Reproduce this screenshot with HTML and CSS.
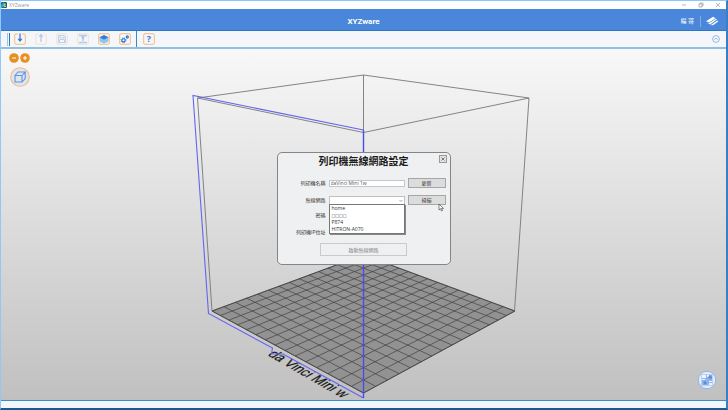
FILE: index.html
```html
<!DOCTYPE html>
<html lang="zh-Hant">
<head>
<meta charset="utf-8">
<title>XYZware</title>
<link rel="stylesheet" href="styles.css">
</head>
<body>
<div class="window">
  <div class="titlebar">
    <svg class="app-icon" viewBox="0 0 6 6"><rect width="6" height="6" rx="1" fill="#17608c"/><path d="M0 3 3 0v4L1 6H0z" fill="#1fa2c4"/><path d="M3 1 5 2 4 5 2 4z" fill="#9ccb4c"/><path d="M3 4h2v1H3z" fill="#e5c93b"/></svg>
    <span class="app-name">XYZware</span>
    <div class="window-buttons">
      <button aria-label="最小化"><svg viewBox="0 0 6 6"><path d="M1 3h4"/></svg></button>
      <button aria-label="還原"><svg viewBox="0 0 6 6"><path d="M1 2h3v3H1zM2 2V1h3v3H4"/></svg></button>
      <button aria-label="關閉"><svg viewBox="0 0 6 6"><path d="m1 1 4 4M5 1 1 5"/></svg></button>
    </div>
  </div>

  <header class="header">
    <h1>XYZware</h1>
    <div class="account">
      <span class="user">楊 哥</span>
      <svg class="brand" viewBox="0 0 14 10"><path d="M1 5.200 8 .8 10.600 2.300 4 6.600z"/><path d="M1.300 7.200 3.600 7.400 11 2.700 12 3.600 5.300 8.200z"/><path d="M4.200 8.900 6.200 8.700 12.400 4.400 13.300 5.500 8 9.200z"/></svg>
    </div>
  </header>

  <div class="toolbar">
    <span class="grip"></span>
    <button aria-label="匯入"><svg viewBox="0 0 12 12"><path class="frame" d="M4 1H2Q.7 1 .7 2v8q0 1.300 1.300 1.300h8q1.300 0 1.300-1.300V2q0-1-1.300-1H8"/><path class="line" d="M6 .5V8"/><path class="fill" d="M3.500 5.700h5L6 8.900z"/></svg></button>
    <button aria-label="匯出" disabled><svg viewBox="0 0 12 12"><path class="frame" d="M4 1H2Q.7 1 .7 2v8q0 1.300 1.300 1.300h8q1.300 0 1.300-1.300V2q0-1-1.300-1H8"/><path class="line" d="M6 2v7"/><path class="fill" d="M3.500 3.700h5L6 .5z"/></svg></button>
    <button aria-label="儲存" disabled><svg viewBox="0 0 12 12"><rect class="frame" x=".7" y=".7" width="10.600" height="10.600" rx="1.300"/><path class="thin" d="M2.500 2.500h6l1 1v6h-7zM4 2.500V5h4V2.500M3.500 9.500v-3h5v3"/></svg></button>
    <button aria-label="列印" disabled><svg viewBox="0 0 12 12"><rect class="frame" x=".7" y=".7" width="10.600" height="10.600" rx="1.300"/><path class="line" d="M2 2.500h8M6 3v5M2 9.500h8"/><path class="fill" d="M4.500 3h3v2L6 7 4.500 5z"/></svg></button>
    <button aria-label="切層"><svg viewBox="0 0 12 12"><rect class="frame" x=".7" y=".7" width="10.600" height="10.600" rx="1.300"/><path class="soft" d="m1.500 4.500 4.500 2 4.500-2v4L6 10.700 1.500 8.500z"/><path class="fill" d="M1.300 4.300 6 2l4.700 2.300L6 6.800z"/></svg></button>
    <button aria-label="設定"><svg viewBox="0 0 12 12"><rect class="frame" x=".7" y=".7" width="10.600" height="10.600" rx="1.300"/><circle class="line" cx="4.500" cy="7.300" r="1.700"/><circle class="gear" cx="4.500" cy="7.300" r="2.500"/><circle class="line" cx="8.300" cy="4" r="1"/></svg></button>
    <span class="divider"></span>
    <button class="help" aria-label="說明"><svg viewBox="0 0 12 12"><rect class="frame" x=".7" y=".7" width="10.600" height="10.600" rx="1.300"/></svg><span>?</span></button>
    <button class="collapse" aria-label="收合"><svg viewBox="0 0 8 8"><circle cx="4" cy="4" r="3.400"/><path d="m2.300 4.600 1.700-1.500 1.700 1.500"/></svg></button>
  </div>

  <main class="scene">
    <svg class="stage" viewBox="0 49 728 351" aria-hidden="true">
      <g class="floor" id="floor"></g>
      <g class="volume">
        <path d="M197.500 98 363.500 75 529 98 363.500 132.500zM363.500 75V130M197.500 98 212 311M529 98 514.500 311"/>
      </g>
      <text class="model" transform="matrix(.87 .5 -1 .6 267 355)">da Vinci Mini w</text>
      <path class="outline" d="M363.500 130 193 95.500 208.500 313.500 272.500 348 271.500 354H283L363.500 398"/>
      <path class="outline axis" d="M363.500 130V398"/>
    </svg>

    <div class="view-tools">
      <div class="zoom-buttons">
        <button aria-label="縮小"><svg viewBox="0 0 10 10"><circle cx="5" cy="5" r="4.800"/><path d="M3 5h4"/></svg></button>
        <button aria-label="放大"><svg viewBox="0 0 10 10"><circle cx="5" cy="5" r="4.800"/><path d="M3 5h4M5 3v4"/></svg></button>
      </div>
      <button class="cube" aria-label="視角"><svg viewBox="0 0 20 20"><circle cx="10" cy="10" r="9.300"/><path d="M5 8.500h7V15H5zM5 8.500l3-3.500h7.200L12 8.500M12 15l3.200-3.500V5"/></svg></button>
    </div>

    <section class="dialog" role="dialog" aria-labelledby="dialog-title">
      <h2 id="dialog-title">列印機無線網路設定</h2>
      <button class="close" aria-label="關閉"><svg viewBox="0 0 8 8"><path d="m2 2 4 4M6 2 2 6"/></svg></button>
      <form class="form">
        <label for="printer">列印機名稱</label>
        <input id="printer" type="text" value="daVinci Mini 1w">
        <button type="button">更新</button>

        <label for="network">無線網路</label>
        <div class="combo">
          <select id="network"><option></option></select>
          <svg class="arrow" viewBox="0 0 4 4"><path d="m.5 1 1.500 1.500L3.500 1"/></svg>
          <ul class="options">
            <li>home</li>
            <li class="boxes">□□□□</li>
            <li>P874</li>
            <li>HITRON-A070</li>
          </ul>
        </div>
        <button type="button" class="scan">掃描</button>

        <label for="password">密碼</label>
        <input id="password" type="password">
        <span></span>

        <label for="address">列印機IP位址</label>
        <output id="address"></output>
      </form>
      <button class="activate" disabled>啟動無線網路</button>
      <svg class="pointer" viewBox="0 0 6 9"><path d="M1 1v6l1.500-1.300L3.500 8l1-.5-1-2.100h2z"/></svg>
    </section>

    <button class="monitor" aria-label="印表機狀態"><svg viewBox="0 0 20 20"><circle cx="10" cy="10" r="8.700"/><rect x="4.500" y="4.500" width="11" height="11" fill="#91b4e8"/><path d="M5 5h4v3H5zM5 9h3v1H5zM12 11h3v1h-3zM12 13h3v2h-3zM10 5h2v2h-2z" fill="#edf4ff"/><path d="M11 8V7l2-2 2 2v2zM6 12l2-1 2 2-2 2z" fill="#5a8fdc"/></svg></button>
  </main>
  <footer class="status"></footer>
</div>
<script src="floor.js"></script>
</body>
</html>
```
FILE: styles.css
```css
* {
  box-sizing: border-box;
}

body {
  margin: 0;
  font-family: "Open Sans", "Noto Sans CJK TC", sans-serif;
  color: #333;
}

button {
  margin: 0;
  padding: 0;
  border: 0;
  background: none;
  font: inherit;
  color: inherit;
}

svg {
  display: block;
}

.window {
  display: flex;
  flex-direction: column;
  height: 100vh;
  overflow: hidden;
  border-top: 1px solid #8fc6fa;
  border-left: 1px solid #91c8fb;
  border-right: 2px solid #377fc6;
  border-bottom: 2px solid #1e5793;
}

.titlebar {
  display: flex;
  align-items: center;
  gap: 2px;
  height: 8px;
  flex: none;
  background: #fff;
}

.app-icon {
  width: 6px;
  height: 6px;
}

.app-name {
  font-size: 5px;
  line-height: 8px;
  color: #999;
}

.window-buttons {
  display: flex;
  gap: 11px;
  margin-left: auto;
  padding-right: 5px;
}

.window-buttons svg {
  width: 6px;
  height: 6px;
  fill: none;
  stroke: #888;
  stroke-width: 0.6;
}

.header {
  display: grid;
  grid-template-columns: 1fr auto 1fr;
  align-items: center;
  height: 22px;
  flex: none;
  padding-top: 3px;
  background: #4a86d9;
  border-bottom: 1px solid #2878c8;
  color: #fff;
}

.header h1 {
  grid-column: 2;
  margin: 0;
  font-family: Roboto, sans-serif;
  font-size: 8px;
  font-weight: 700;
}

.account {
  display: flex;
  align-items: center;
  justify-content: flex-end;
  padding-right: 7px;
}

.user {
  padding-right: 6px;
  border-right: 1px solid #82acdf;
  font-size: 6px;
  line-height: 11px;
}

.brand {
  width: 14px;
  height: 10px;
  margin-left: 4px;
  fill: #fff;
}

.toolbar {
  display: flex;
  align-items: center;
  gap: 9px;
  height: 18px;
  flex: none;
  padding: 0 6px;
  background: #f4f6fa;
  border-bottom: 2px solid #91bfe0;
}

.toolbar button {
  width: 12px;
  height: 12px;
}

.grip {
  width: 3px;
  height: 13px;
  margin-right: -5px;
  border-left: 1px solid #9fc3de;
  border-right: 1px solid #2c77b4;
}

.divider {
  width: 1px;
  height: 16px;
  margin: 0 -3px 0 -4px;
  background: #388ac2;
}

.toolbar svg {
  fill: none;
  stroke: #3a7ad0;
}

.toolbar .frame {
  stroke: #f5bd7b;
}

.toolbar .line {
  stroke-width: 1.3;
}

.toolbar .thin {
  stroke-width: 0.8;
}

.toolbar .fill {
  fill: #3a7ad0;
  stroke: none;
}

.toolbar .soft {
  fill: #8fc5f3;
  stroke: none;
}

.toolbar .gear {
  stroke-width: 0.8;
  stroke-dasharray: 1 1;
}

.toolbar button:disabled {
  opacity: 0.35;
}

.help {
  display: grid;
}

.help svg,
.help span {
  grid-area: 1 / 1;
}

.help span {
  font-size: 9px;
  font-weight: 700;
  line-height: 12px;
  color: #3f77c8;
}

.toolbar .collapse {
  width: 8px;
  height: 8px;
  margin-left: auto;
}

.collapse svg {
  stroke: #82abe0;
  stroke-width: 0.8;
}

.scene {
  position: relative;
  flex: 1;
  min-height: 0;
  background: linear-gradient(#f8f8f8, #c0c0c0);
}

.stage {
  position: absolute;
  inset: 0 -2px 0 -1px;
  width: calc(100% + 3px);
  height: 100%;
}

.floor .slab {
  fill: #929292;
}

.floor path {
  fill: none;
  stroke: #414141;
  stroke-width: 0.7;
}

.volume {
  fill: none;
  stroke: #777;
  stroke-width: 0.9;
}

.outline {
  fill: none;
  stroke: #6464f0;
  stroke-width: 1.1;
}

.axis {
  stroke: #4a4af0;
  stroke-width: 1.4;
}

.model {
  font-family: "Liberation Sans", sans-serif;
  font-size: 13px;
  fill: #171717;
  stroke: #171717;
  stroke-width: 0.2;
}

.view-tools {
  position: absolute;
  top: 4px;
  left: 8px;
}

.zoom-buttons {
  display: flex;
  gap: 1px;
}

.zoom-buttons svg {
  width: 10px;
  height: 10px;
  fill: #e78f20;
  stroke: #fff;
  stroke-width: 1;
}

.zoom-buttons circle {
  stroke: none;
}

.cube svg {
  width: 20px;
  height: 20px;
  fill: none;
  stroke: #5d93e2;
  stroke-width: 1.1;
}

.cube circle {
  fill: #e1e4ec;
  stroke: #efbd86;
}

.cube {
  display: block;
  margin: 4px 0 0 1px;
}

.dialog {
  position: absolute;
  top: 103px;
  left: 50%;
  width: 174px;
  height: 113px;
  margin-left: -87px;
  border: 1px solid #858585;
  border-radius: 5px;
  background: #eff0f1;
}

.dialog h2 {
  margin: 0;
  text-align: center;
  font-size: 10px;
  font-weight: 700;
  line-height: 16px;
  color: #1c1c1c;
}

.close {
  position: absolute;
  top: 2px;
  right: 3px;
  width: 8px;
  height: 8px;
  border: 1px solid #999;
  background: #e4e4e4;
}

.close svg {
  width: 6px;
  height: 6px;
  stroke: #555;
}

.form {
  display: grid;
  grid-template-columns: 48px 76px 38px;
  grid-template-rows: 10px 10px 6px 14px;
  column-gap: 3px;
  row-gap: 7px;
  align-items: center;
  margin-top: 9px;
  font-size: 5px;
  line-height: 8px;
}

.form label {
  text-align: right;
  white-space: nowrap;
}

.form input {
  width: 100%;
  height: 7px;
  padding: 0 1px;
  border: 1px solid #c4c6c8;
  background: #fff;
  font: inherit;
  line-height: 5px;
  color: #555;
}

.form button {
  height: 10px;
  border: 1px solid #a6a6a6;
  background: #dcdcdc;
}

.combo {
  position: relative;
}

.combo select {
  display: block;
  width: 100%;
  height: 9px;
  border: 1px solid #bfc1c3;
  border-radius: 0;
  appearance: none;
  background: #fff;
  font-size: 5px;
}

.arrow {
  position: absolute;
  top: 3px;
  right: 2px;
  width: 4px;
  height: 4px;
  fill: none;
  stroke: #888;
  stroke-width: 0.7;
}

.options {
  position: absolute;
  z-index: 1;
  top: 8px;
  left: 0;
  width: 100%;
  margin: 0;
  padding: 0 2px;
  border: 1px solid #777;
  background: #fff;
  box-shadow: 1px 1px 0 #888;
  list-style: none;
  line-height: 7px;
}

.options .boxes {
  font-family: "DejaVu Sans", sans-serif;
  font-size: 4px;
}

.activate {
  display: block;
  width: 87px;
  height: 13px;
  margin: 4px auto 0;
  border: 1px solid #c8cbce;
  font-size: 5px;
  color: #858585;
}

.pointer {
  position: absolute;
  top: 50px;
  right: 6px;
  width: 6px;
  height: 9px;
  fill: #fff;
  stroke: #333;
  stroke-width: 0.6;
}

.monitor {
  position: absolute;
  right: 9px;
  bottom: 10px;
}

.monitor svg {
  width: 20px;
  height: 20px;
}

.monitor circle {
  fill: #e5edfa;
  stroke: #8db4ea;
}

.status {
  height: 8px;
  flex: none;
  border-top: 1px solid #3b8ecb;
  background: #f3f6fb;
}
```
FILE: floor.js
```js
// Perspective projection of the square print bed; u and v run from 0 to 1.
const CELLS = 15;
const floor = document.getElementById("floor");

function project(u, v) {
  const depth = (u + v) / 2;
  const w = 1 + 0.464 * depth;
  const x = 363.5 + (186.6 * (u - v)) / w;
  const y = (393 - 19.7 * depth) / w;
  return x.toFixed(2) + " " + y.toFixed(2);
}

function addPath(d, className) {
  const path = document.createElementNS("http://www.w3.org/2000/svg", "path");
  path.setAttribute("d", d);
  if (className) path.setAttribute("class", className);
  floor.appendChild(path);
}

addPath(`M${project(0, 0)}L${project(1, 0)}L${project(1, 1)}L${project(0, 1)}Z`, "slab");
for (let i = 0; i <= CELLS; i++) {
  const s = i / CELLS;
  addPath(`M${project(s, 0)}L${project(s, 1)}M${project(0, s)}L${project(1, s)}`);
}
```
